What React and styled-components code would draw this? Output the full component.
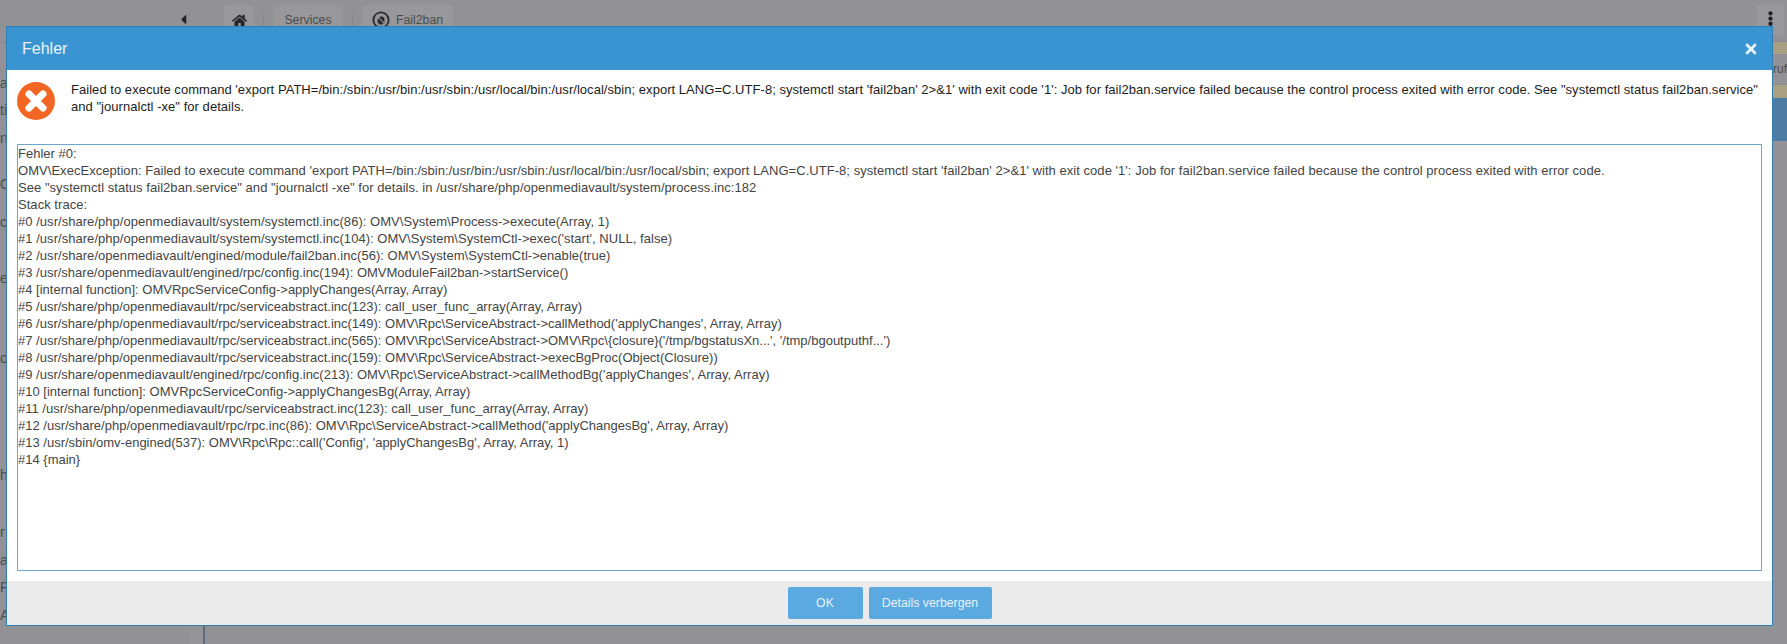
import styled, { createGlobalStyle } from "styled-components";
import { FaHome, FaCaretLeft, FaEllipsisV, FaTimes } from "react-icons/fa";

const GlobalStyle = createGlobalStyle`
  html, body {
    margin: 0;
    padding: 0;
    height: 100%;
    overflow: hidden;
  }
  body {
    font-family: "Liberation Sans", Arial, sans-serif;
  }
`;

const sideLetters = [
  { text: "a", gap: 33 },
  { text: "ti", gap: 10 },
  { text: "n", gap: 11 },
  { text: "O", gap: 29 },
  { text: "ci", gap: 21 },
  { text: "e", gap: 39 },
  { text: "o", gap: 63 },
  { text: "h", gap: 100 },
  { text: "r", gap: 40 },
  { text: "ab", gap: 11 },
  { text: "F", gap: 10 },
  { text: "Al", gap: 11 },
];

const trace = [
  "Fehler #0:",
  "OMV\\ExecException: Failed to execute command 'export PATH=/bin:/sbin:/usr/bin:/usr/sbin:/usr/local/bin:/usr/local/sbin; export LANG=C.UTF-8; systemctl start 'fail2ban' 2>&1' with exit code '1': Job for fail2ban.service failed because the control process exited with error code.",
  "See \"systemctl status fail2ban.service\" and \"journalctl -xe\" for details. in /usr/share/php/openmediavault/system/process.inc:182",
  "Stack trace:",
  "#0 /usr/share/php/openmediavault/system/systemctl.inc(86): OMV\\System\\Process->execute(Array, 1)",
  "#1 /usr/share/php/openmediavault/system/systemctl.inc(104): OMV\\System\\SystemCtl->exec('start', NULL, false)",
  "#2 /usr/share/openmediavault/engined/module/fail2ban.inc(56): OMV\\System\\SystemCtl->enable(true)",
  "#3 /usr/share/openmediavault/engined/rpc/config.inc(194): OMVModuleFail2ban->startService()",
  "#4 [internal function]: OMVRpcServiceConfig->applyChanges(Array, Array)",
  "#5 /usr/share/php/openmediavault/rpc/serviceabstract.inc(123): call_user_func_array(Array, Array)",
  "#6 /usr/share/php/openmediavault/rpc/serviceabstract.inc(149): OMV\\Rpc\\ServiceAbstract->callMethod('applyChanges', Array, Array)",
  "#7 /usr/share/php/openmediavault/rpc/serviceabstract.inc(565): OMV\\Rpc\\ServiceAbstract->OMV\\Rpc\\{closure}('/tmp/bgstatusXn...', '/tmp/bgoutputhf...')",
  "#8 /usr/share/php/openmediavault/rpc/serviceabstract.inc(159): OMV\\Rpc\\ServiceAbstract->execBgProc(Object(Closure))",
  "#9 /usr/share/openmediavault/engined/rpc/config.inc(213): OMV\\Rpc\\ServiceAbstract->callMethodBg('applyChanges', Array, Array)",
  "#10 [internal function]: OMVRpcServiceConfig->applyChangesBg(Array, Array)",
  "#11 /usr/share/php/openmediavault/rpc/serviceabstract.inc(123): call_user_func_array(Array, Array)",
  "#12 /usr/share/php/openmediavault/rpc/rpc.inc(86): OMV\\Rpc\\ServiceAbstract->callMethod('applyChangesBg', Array, Array)",
  "#13 /usr/sbin/omv-engined(537): OMV\\Rpc\\Rpc::call('Config', 'applyChangesBg', Array, Array, 1)",
  "#14 {main}",
];

const App = () => {
  return (
    <Page>
      <GlobalStyle />
      <TopBar>
        <BackArrow>
          <FaCaretLeft />
        </BackArrow>
        <Crumb $width={30}>
          <FaHome />
        </Crumb>
        <CrumbDivider />
        <Crumb $width={70}>Services</Crumb>
        <CrumbDivider />
        <Crumb $width={91}>
          <BanIcon viewBox="0 0 16 16">
            <circle cx="8" cy="8" r="6.8" fill="none" stroke="#2c2c30" strokeWidth="1.7" />
            <path d="M5 7.5 8 4.5l3 1.5v4.5L9 12H6.5L5 10z" fill="#2c2c30" />
            <path d="M3.5 3.5l9 9" stroke="#929296" strokeWidth="1" />
          </BanIcon>
          Fail2ban
        </Crumb>
        <MenuButton>
          <FaEllipsisV />
        </MenuButton>
      </TopBar>

      <Body>
        <SideNav>
          {sideLetters.map((item, i) => (
            <SideItem key={i} $gap={item.gap}>
              {item.text}
            </SideItem>
          ))}
        </SideNav>
        <SideEdge />
        <Main />
        <RightRail>
          <TanBar $height={12} />
          <RailText>ruf</RailText>
          <TanBar $height={13} />
          <BlueBlock />
        </RightRail>
      </Body>

      <Modal>
        <ModalHeader>
          <ModalTitle>Fehler</ModalTitle>
          <CloseIcon />
        </ModalHeader>
        <ModalBody>
          <MessageRow>
            <ErrorIcon viewBox="0 0 38 38">
              <circle cx="19" cy="19" r="19" fill="#f26522" />
              <path d="M12 12l14 14M26 12 12 26" stroke="#fff" strokeWidth="7" strokeLinecap="round" />
            </ErrorIcon>
            <Message>
              Failed to execute command 'export PATH=/bin:/sbin:/usr/bin:/usr/sbin:/usr/local/bin:/usr/local/sbin; export LANG=C.UTF-8; systemctl start 'fail2ban' 2&gt;&amp;1' with exit code '1': Job for fail2ban.service failed because the control process exited with error code. See "systemctl status fail2ban.service" and "journalctl -xe" for details.
            </Message>
          </MessageRow>
          <TraceBox>
            {trace.map((line, i) => (
              <TraceLine key={i} $wide={i > 0 && i < 7}>
                {line}
              </TraceLine>
            ))}
          </TraceBox>
        </ModalBody>
        <ModalFooter>
          <FooterButton $width={75}>OK</FooterButton>
          <FooterButton $width={123}>Details verbergen</FooterButton>
        </ModalFooter>
      </Modal>
    </Page>
  );
};

export default App;

const Page = styled.div`
  position: relative;
  display: flex;
  flex-direction: column;
  height: 100vh;
  overflow: hidden;
  background: #929296;
  color: #4a4a4e;
`;

const TopBar = styled.div`
  display: flex;
  align-items: flex-start;
  flex: none;
  height: 42px;
  padding: 5px 3px 0 176px;
  box-sizing: border-box;
  border-bottom: 1px solid #8a8a8e;
`;

const BackArrow = styled.div`
  width: 48px;
  padding-top: 7px;
  font-size: 15px;
  color: #26262a;
`;

const Crumb = styled.div`
  display: flex;
  align-items: center;
  justify-content: center;
  gap: 6px;
  width: ${(p) => p.$width}px;
  height: 30px;
  border-radius: 3px;
  background: #98989b;
  font-size: 12.3px;
  color: #4c4c50;

  svg {
    color: #26262a;
    font-size: 15px;
  }
`;

const CrumbDivider = styled.div`
  width: 1px;
  height: 18px;
  margin: 7px 9px 0 9px;
  background: #88888c;
`;

const BanIcon = styled.svg`
  width: 18px;
  height: 18px;
`;

const MenuButton = styled.div`
  display: flex;
  justify-content: center;
  margin-left: auto;
  width: 27px;
  height: 30px;
  padding-top: 6px;
  box-sizing: border-box;
  background: #98989b;
  color: #1d1d20;
  font-size: 15px;
`;

const Body = styled.div`
  display: flex;
  flex: 1;
  min-height: 0;
`;

const SideNav = styled.div`
  display: flex;
  flex-direction: column;
  width: 190px;
  flex: none;
  overflow: hidden;
`;

const SideItem = styled.div`
  margin-top: ${(p) => p.$gap}px;
  font-size: 14px;
  line-height: 17px;
  color: #4c4c50;
`;

const SideEdge = styled.div`
  flex: none;
  width: 13px;
  background: #959599;
  border-right: 2px solid #5d6c7c;
`;

const Main = styled.div`
  flex: 1;
`;

const RightRail = styled.div`
  display: flex;
  flex-direction: column;
  flex: none;
  width: 14px;
`;

const TanBar = styled.div`
  height: ${(p) => p.$height}px;
  background: #a8a080;
`;

const RailText = styled.div`
  height: 31px;
  font-size: 12px;
  line-height: 31px;
  color: #4c4c50;
`;

const BlueBlock = styled.div`
  height: 43px;
  background: #4c7ba4;
`;

const Modal = styled.div`
  position: absolute;
  left: 6px;
  top: 26px;
  display: flex;
  flex-direction: column;
  width: 1767px;
  height: 600px;
  box-sizing: border-box;
  border: 1px solid #2f7fb5;
  background: #fff;
`;

const ModalHeader = styled.div`
  display: flex;
  align-items: center;
  justify-content: space-between;
  flex: none;
  height: 43px;
  padding: 0 13px 0 15px;
  box-sizing: border-box;
  background: #3b94d2;
`;

const ModalTitle = styled.div`
  font-size: 16px;
  color: #eaf4fb;
`;

const CloseIcon = styled(FaTimes)`
  font-size: 16px;
  color: #e6f2fb;
`;

const ModalBody = styled.div`
  display: flex;
  flex-direction: column;
  flex: 1;
  min-height: 0;
  padding: 11px 10px 10px 10px;
`;

const MessageRow = styled.div`
  display: flex;
  align-items: flex-start;
  gap: 16px;
  height: 63px;
  flex: none;
`;

const ErrorIcon = styled.svg`
  flex: none;
  width: 38px;
  height: 38px;
  margin-top: 1px;
`;

const Message = styled.div`
  font-size: 13px;
  line-height: 17px;
  letter-spacing: 0.04px;
  color: #1c1c1c;
`;

const TraceBox = styled.div`
  flex: 1;
  min-height: 0;
  border: 1px solid #6fa6cc;
  padding: 0;
  font-size: 13px;
  line-height: 17px;
  color: #444;
`;

const TraceLine = styled.div`
  white-space: pre-wrap;
  letter-spacing: ${(p) => (p.$wide ? "0.04px" : "0")};
`;

const ModalFooter = styled.div`
  display: flex;
  align-items: center;
  justify-content: center;
  gap: 6px;
  flex: none;
  height: 44px;
  background: #ebebeb;
`;

const FooterButton = styled.button`
  width: ${(p) => p.$width}px;
  height: 32px;
  border: none;
  border-radius: 2px;
  background: #5aa9e0;
  color: #e8f3fb;
  font-family: inherit;
  font-size: 12.3px;
  padding: 0;
`;
